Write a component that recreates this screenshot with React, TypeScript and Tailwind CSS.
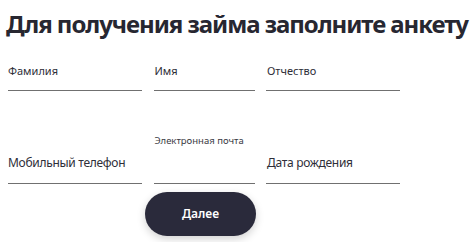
const font = { fontFamily: '"Noto Sans", "Open Sans", sans-serif' };

export default function App() {
  return (
    <div className="h-[242px] w-[474px] overflow-hidden bg-white" style={font}>
      <h1 className="pt-[8px] pl-[6px] text-[24px] leading-[32px] font-bold tracking-[-1.05px] whitespace-nowrap text-[#272731]">
        Для получения займа заполните анкету
      </h1>

      <div className="mt-[8px] grid grid-cols-[134px_101px_134px] gap-x-[11.5px] pl-[8px]">
        <div className="flex h-[43px] flex-col justify-end border-b border-[#707070]">
          <span className="pb-[12px] text-[11px] leading-[14px] text-[#2e2e38]">Фамилия</span>
        </div>
        <div className="flex h-[43px] flex-col justify-end border-b border-[#707070]">
          <span className="pb-[12px] pl-[1px] text-[11px] leading-[14px] text-[#2e2e38]">Имя</span>
        </div>
        <div className="flex h-[43px] flex-col justify-end border-b border-[#707070]">
          <span className="pb-[12px] pl-[1px] text-[11px] leading-[14px] text-[#2e2e38]">Отчество</span>
        </div>

        <div className="flex h-[93px] flex-col justify-end border-b border-[#707070]">
          <span className="pb-[12px] text-[12px] leading-[16px] tracking-[-0.3px] text-[#2e2e38]">Мобильный телефон</span>
        </div>
        <div className="flex h-[93px] flex-col border-b border-[#707070]">
          <span className="mt-[43px] pl-[1px] text-[9.5px] leading-[13px] text-[#3a3a44]">Электронная почта</span>
        </div>
        <div className="flex h-[93px] flex-col justify-end border-b border-[#707070]">
          <span className="pb-[12px] pl-[1px] text-[12px] leading-[16px] tracking-[-0.3px] text-[#2e2e38]">Дата рождения</span>
        </div>
      </div>

      <div className="mt-[8px] pl-[145px]">
        <button className="h-[44px] w-[111px] rounded-full bg-[#2a2a3b] text-[12px] font-semibold text-white shadow-[0_3px_8px_rgba(0,0,0,0.18)]">
          Далее
        </button>
      </div>
    </div>
  );
}
